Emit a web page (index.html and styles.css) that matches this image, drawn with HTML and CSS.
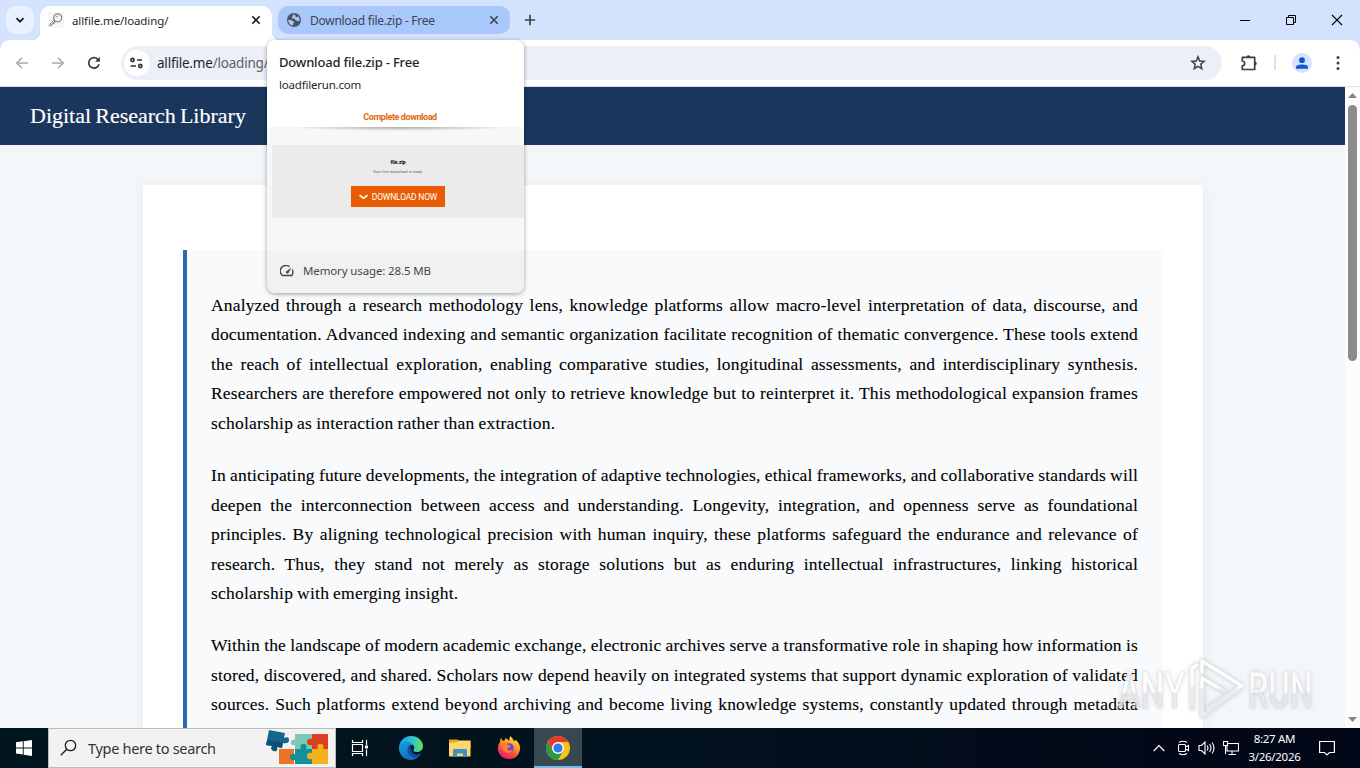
FILE: index.html
```
<!DOCTYPE html>
<html lang="en">

<head>
    <meta charset="UTF-8">
    <meta name="viewport" content="width=device-width, initial-scale=1.0">
    <title>Digital Research Library</title>
    <link rel="stylesheet" href="styles.css">
</head>

<body>
    <!-- Browser tabs -->
    <div class="tabstrip">
        <button class="tab-search"><svg width="10" height="10" viewBox="0 0 10 10"><path d="M1.5 3.2L5 6.7l3.500-3.500" fill="none" stroke="#1f1f1f" stroke-width="1.8"/></svg></button>
        <div class="tab tab-active">
            <svg class="favicon" width="16" height="16" viewBox="0 0 16 16"><rect width="16" height="16" fill="#f6f6f6"/><g fill="none" stroke="#858585"><circle cx="9.700" cy="5.800" r="4" stroke-width="1.300"/><path d="M7 9l-5 5M6 8l-4.500 4.500q-.5 1.500 1 1.200L7.500 10M8 5.500q.5-1.500 2-1.500" stroke-width="1"/></g></svg>
            <span class="tab-title">allfile.me/loading/</span>
            <svg class="tab-close" width="10" height="10" viewBox="0 0 10 10"><path d="M1.300 1.300l7.400 7.400M8.700 1.300L1.300 8.700" stroke="#1f1f1f" stroke-width="1.600"/></svg>
        </div>
        <div class="tab tab-hover">
            <svg class="favicon" width="16" height="16" viewBox="0 0 16 16"><circle cx="8" cy="8" r="7" fill="#4b5461"/><path d="M2.200 8q2-.5 4 .8t2.200 1.200q-.4 1-1.200 1.400L7 13.600Q2.500 13 2.200 8zM8.500 2.300q-1.700.3-1.700 1.500 0 1-.9 1.300v1.300h2.500q.8.300.9 1.500 1.500 0 2 1.200 1.600-.3 2.300.1.500-3-1.600-5.200-.3 1.400-1.500 1.300-1.200-.1-1-1z" fill="#a8c7fa"/></svg>
            <span class="tab-title">Download file.zip - Free</span>
            <svg class="tab-close" width="10" height="10" viewBox="0 0 10 10"><path d="M1.300 1.300l7.400 7.400M8.700 1.300L1.300 8.700" stroke="#3c4350" stroke-width="1.600"/></svg>
        </div>
        <svg class="new-tab" width="12" height="12" viewBox="0 0 12 12"><path d="M6 .8v10.400M.8 6h10.400" stroke="#3f4349" stroke-width="1.700"/></svg>
        <div class="window-buttons">
            <svg width="12" height="12" viewBox="0 0 12 12"><path d="M1 6.500h10" stroke="#000"/></svg>
            <svg width="12" height="12" viewBox="0 0 12 12"><path d="M1.500 3.500h7v7h-7zM3.500 3.500v-2h7v7h-2" fill="none" stroke="#000"/></svg>
            <svg width="12" height="12" viewBox="0 0 12 12"><path d="M1 1l10 10M11 1L1 11" stroke="#000" stroke-width="1.100"/></svg>
        </div>
    </div>

    <!-- Toolbar -->
    <div class="toolbar-wrap">
        <div class="toolbar">
            <svg class="nav-icon" width="16" height="16" viewBox="0 0 16 16"><path d="M14 8H3M8 2.700L2.700 8 8 13.300" fill="none" stroke="#a9abae" stroke-width="1.500"/></svg>
            <svg class="nav-icon" width="16" height="16" viewBox="0 0 16 16"><path d="M2 8h11M8 2.700L13.300 8 8 13.300" fill="none" stroke="#a9abae" stroke-width="1.500"/></svg>
            <svg class="nav-icon" width="16" height="16" viewBox="0 0 16 16"><path d="M13 9.200A5.200 5.200 0 1 1 11.800 4.400L13 5.700" fill="none" stroke="#3c4043" stroke-width="1.700"/><path d="M13.900 1.800v5H9z" fill="#3c4043"/></svg>
            <div class="omnibox">
                <span class="site-info"><svg width="16" height="16" viewBox="0 0 16 16"><g fill="none" stroke="#303134" stroke-width="1.600"><circle cx="3.500" cy="5" r="1.600"/><path d="M8 5h5M1.500 11h5.500"/><circle cx="11.300" cy="11" r="1.600"/></g></svg></span>
                <span class="url">allfile.me<span>/loading/</span></span>
                <svg class="star" width="18" height="18" viewBox="0 0 18 18"><path d="M9 2.800l1.700 4.200 4.400.4-3.300 2.900 1 4.300L9 12.300l-3.800 2.300 1-4.300-3.300-2.900 4.400-.4z" fill="none" stroke="#3c4043" stroke-width="1.500"/></svg>
            </div>
            <svg class="puzzle" width="20" height="20" viewBox="0 0 20 20"><path d="M3.300 4.300h12.400v12.200H3.300v-3.700c3.200-.5 3.200-4.300 0-4.800z" fill="none" stroke="#3c4043" stroke-width="1.700" stroke-linejoin="round"/><path d="M7.400 4.200a2 2 0 0 1 4 0zM15.700 8.400a2 2 0 0 1 0 4z" fill="#3c4043"/></svg>
            <span class="divider"></span>
            <span class="profile"><svg width="20" height="20" viewBox="0 0 20 20"><circle cx="10" cy="7.200" r="2.900" fill="#0b57d0"/><path d="M4 15.800v-1.600q0-2.800 6-2.800t6 2.800v1.600z" fill="#0b57d0"/></svg></span>
            <svg class="menu" width="4" height="16" viewBox="0 0 4 16"><g fill="#3c4043"><circle cx="2" cy="2.500" r="1.500"/><circle cx="2" cy="8" r="1.500"/><circle cx="2" cy="13.500" r="1.500"/></g></svg>
        </div>
    </div>

    <!-- Web page -->
    <div class="viewport">
        <div class="page">
            <header class="site-header">Digital Research Library</header>
            <main class="card">
                <article class="article">
                    <p>
                        <span class="line">Analyzed through a research methodology lens, knowledge platforms allow macro-level interpretation of data, discourse, and</span>
                        <span class="line">documentation. Advanced indexing and semantic organization facilitate recognition of thematic convergence. These tools extend</span>
                        <span class="line">the reach of intellectual exploration, enabling comparative studies, longitudinal assessments, and interdisciplinary synthesis.</span>
                        <span class="line">Researchers are therefore empowered not only to retrieve knowledge but to reinterpret it. This methodological expansion frames</span>
                        <span class="line last">scholarship as interaction rather than extraction.</span>
                    </p>
                    <p>
                        <span class="line">In anticipating future developments, the integration of adaptive technologies, ethical frameworks, and collaborative standards will</span>
                        <span class="line">deepen the interconnection between access and understanding. Longevity, integration, and openness serve as foundational</span>
                        <span class="line">principles. By aligning technological precision with human inquiry, these platforms safeguard the endurance and relevance of</span>
                        <span class="line">research. Thus, they stand not merely as storage solutions but as enduring intellectual infrastructures, linking historical</span>
                        <span class="line last">scholarship with emerging insight.</span>
                    </p>
                    <p>
                        <span class="line">Within the landscape of modern academic exchange, electronic archives serve a transformative role in shaping how information is</span>
                        <span class="line">stored, discovered, and shared. Scholars now depend heavily on integrated systems that support dynamic exploration of validated</span>
                        <span class="line">sources. Such platforms extend beyond archiving and become living knowledge systems, constantly updated through metadata</span>
                    </p>
                </article>
            </main>
        </div>
        <div class="scrollbar">
            <svg width="9" height="5" viewBox="0 0 9 5"><path d="M0 5l4.500-5L9 5z" fill="#858585"/></svg>
            <span class="thumb"></span>
            <svg class="arrow-down" width="9" height="5" viewBox="0 0 9 5"><path d="M0 0l4.500 5L9 0z" fill="#858585"/></svg>
        </div>
    </div>

    <!-- Taskbar -->
    <div class="taskbar">
        <span class="start"><svg width="16" height="16" viewBox="0 0 16 16"><path d="M0 2.300L6.800 1.300v6.200H0zM7.700 1.200L16 0v7.500H7.700zM0 8.400h6.800v6.200L0 13.600zM7.700 8.400H16V16l-8.300-1.200z" fill="#fff"/></svg></span>
        <div class="search">
            <svg width="17" height="18" viewBox="0 0 17 18"><g fill="none" stroke="#1a1a1a" stroke-width="1.300"><circle cx="10.500" cy="6.500" r="5.200"/><path d="M6.800 10.200L.8 16.300"/></g></svg>
            <span>Type here to search</span>
            <svg class="search-art" width="64" height="36" viewBox="0 0 64 36">
                <path d="M14 19h15v15H14z" fill="#ed7225"/>
                <path d="M30 4h17v15H30v-4q-4 1-4-2.500t4-2.500z" fill="#7cc8b7"/>
                <path d="M47 4h16v15H47v-4q-5 1-5-3t5-3z" fill="#d8401f"/>
                <path d="M30 19h6q-2-5 2.500-5t2.500 5h6v15H30v-4q-5 1-5-3t5-3z" fill="#13909a"/>
                <path d="M47 19h6q-2-5 2.500-5t2.500 5h5v15H47v-5q-5 1-5-3t5-3z" fill="#f6b319"/>
                <path d="M4 0l16 3-1 5q5-2 5 2t-6 3l-1 5-5-1q1 5-3 4t-2-5l-6-1z" fill="#13678e"/>
                <path d="M2.500 10l15 2.500-.5 5.500-5-1q1 5-3 4t-2-5l-6-1z" fill="#0d5276"/>
            </svg>
        </div>
        <div class="apps">
            <span class="app app-view"><svg width="18" height="16" viewBox="0 0 18 16"><path d="M1.500 0v2.500h10V0M1.500 16v-2.500h10V16M1.500 4.500v7h10v-7zM15.500 0v5M15.500 9.500V16" fill="none" stroke="#fff" stroke-width="1.200"/><path d="M14 5.500h3v3h-3z" fill="#fff"/></svg></span>
            <span class="app"><svg width="24" height="24" viewBox="0 0 24 24">
                <defs>
                    <linearGradient id="edgeTop" x1="0" x2="1"><stop offset="0" stop-color="#1495dd"/><stop offset=".55" stop-color="#2cc4d5"/><stop offset="1" stop-color="#67df54"/></linearGradient>
                    <linearGradient id="edgeBottom" x1="0" y1="0" x2="1" y2="1"><stop offset="0" stop-color="#1b9de2"/><stop offset="1" stop-color="#0c5cae"/></linearGradient>
                </defs>
                <path d="M0 12C0 5 5 0 12 0s12 5 12 10c0 4-3 6-6.500 6-2.500 0-3.700-1-3-2 2-3-.5-6-3.500-6-5 0-8 3-11 4z" fill="url(#edgeTop)"/>
                <path d="M0 12c1-5 6-7 10-6 2 .4 3.500 2 3.500 3-4-1-6 6-1 9 3.500 2 7 1 9.500-.5C20 21.500 16 24 12 24 5 24 0 19 0 12z" fill="url(#edgeBottom)"/>
                <path d="M8.500 13c-.5 5 4 9 9 9 2-1 4-3 4.500-4.500-4 2.500-9 .5-9.500-3C12 12 14 11 14 10c-1-1.500-5-1-5.500 3z" fill="#0d4f9e"/>
                <path d="M11 9.500q3-.5 3.500 2 0 1.500-1 3-2-1-2.500-5z" fill="#061825"/>
            </svg></span>
            <span class="app"><svg width="22" height="20" viewBox="0 0 22 20"><path d="M0 1.500h8.500l2 1.500H21.500V10H0z" fill="#e8a51d"/><path d="M0 5l8-1 2-1.500h11.500v16H0z" fill="#ffd768"/><path d="M4 19v-6.500q0-1.500 1.500-1.500h11q1.500 0 1.500 1.500V19h-4v-3.500H8V19z" fill="#3b8ed0"/></svg></span>
            <span class="app"><svg width="24" height="24" viewBox="0 0 24 24">
                <defs><linearGradient id="fox" x1=".8" y1="0" x2=".3" y2="1"><stop offset="0" stop-color="#fff14a"/><stop offset=".4" stop-color="#ff9a20"/><stop offset=".75" stop-color="#ff3b48"/><stop offset="1" stop-color="#e31587"/></linearGradient></defs>
                <path d="M3 6q0-2 1-4l2 3 2-1 .5-2Q11 3 12 5l1-5q3 2 4 5l2-1q5 5 4 10-2 9-11 9T.8 14Q.5 9 3 6z" fill="url(#fox)"/>
                <circle cx="12" cy="12" r="4.800" fill="#7542df"/>
                <path d="M5 8q4-2 6 1l3 .5q-1 2-3.500 2.500-1 2 2 2.500l3-.7q-1.500 3.500-5 3.200-5.500-1-5.500-9z" fill="#ff8028"/>
            </svg></span>
            <span class="app app-current"><svg width="24" height="24" viewBox="0 0 24 24"><circle cx="12" cy="12" r="12" fill="#fbc116"/><path d="M1.600 6A12 12 0 0 1 22.400 6H12L6.800 15z" fill="#e33b2e"/><path d="M1.600 6A12 12 0 0 0 12 24l5.200-9H6.800z" fill="#259b48"/><circle cx="12" cy="12" r="6" fill="#fff"/><circle cx="12" cy="12" r="4.600" fill="#3678e8"/></svg></span>
        </div>
        <div class="tray">
            <svg width="12" height="8" viewBox="0 0 12 8"><path d="M.7 7L6 1.500 11.300 7" fill="none" stroke="#fff" stroke-width="1.200"/></svg>
            <svg width="14" height="16" viewBox="0 0 14 16"><g fill="none" stroke="#fff" stroke-width="1.100"><rect x="1.500" y="4.500" width="7" height="7" rx="1"/><path d="M8.500 7l3-1.500v5L8.500 9M2 2.500Q6 0 10 2.500M2 13.500q4 2.500 8 0"/></g></svg>
            <svg width="18" height="16" viewBox="0 0 18 16"><g fill="none" stroke="#fff" stroke-width="1.100"><path d="M1 5.500h2.500L7 2v12l-3.500-3.500H1zM9 5.500q2 2.500 0 5M11.500 4q3 4 0 8M14 2.500q4 5.500 0 11"/></g></svg>
            <svg width="16" height="16" viewBox="0 0 16 16"><path d="M5 3.500h10.500v7.500H4V6M9 11v3M5.500 14.500H13M.5 1.500h4v4h-4zM2.500 5.500V14" fill="none" stroke="#fff" stroke-width="1.100"/></svg>
            <div class="clock"><span>8:27 AM</span><span>3/26/2026</span></div>
            <svg class="notify" width="16" height="16" viewBox="0 0 16 16"><path d="M.6 1.500h14.800v11h-4.900L8 15l-2.500-2.500H.6z" fill="none" stroke="#fff" stroke-width="1.200"/></svg>
        </div>
    </div>

    <!-- Hover card of the second tab -->
    <div class="hover-card">
        <div class="hover-head">
            <strong>Download file.zip - Free</strong>
            <span>loadfilerun.com</span>
        </div>
        <div class="preview">
            <div class="preview-top">Complete download</div>
            <div class="preview-body">
                <b>file.zip</b>
                <small>Your free download is ready.</small>
                <span class="download"><svg width="9" height="6" viewBox="0 0 9 6"><path d="M.5 1.200l4 3 4-3" fill="none" stroke="#fff" stroke-width="1.600"/></svg>DOWNLOAD NOW</span>
            </div>
        </div>
        <div class="memory">
            <svg width="14" height="12" viewBox="0 0 14 12"><path d="M9.500 1.700A5.600 5.600 0 0 0 2.300 10.500h9.400A5.600 5.600 0 0 0 12.200 4.500" fill="none" stroke="#474747" stroke-width="1.400"/><path d="M11.500 2.500L8.300 8.200a1.400 1.400 0 0 1-2.200-1.700z" fill="#474747"/></svg>
            <span>Memory usage: 28.5 MB</span>
        </div>
    </div>

    <!-- Watermark -->
    <svg class="watermark" width="220" height="76" viewBox="0 0 220 76">
        <defs>
            <linearGradient id="mark" x1="0" y1="0" x2="0" y2="1"><stop offset=".52" stop-color="#fff" stop-opacity=".85"/><stop offset=".54" stop-color="#e6e8ea" stop-opacity=".75"/></linearGradient>
            <linearGradient id="markLine" x1="0" y1="0" x2="0" y2="1"><stop offset=".48" stop-color="#fcfdfd"/><stop offset=".52" stop-color="#e9ebed"/></linearGradient>
        </defs>
        <g fill="url(#mark)" stroke="#c9cdd1" stroke-opacity=".5" stroke-width=".7">
            <text x="8" y="56" textLength="67" lengthAdjust="spacingAndGlyphs">ANY</text>
            <text x="138" y="56" textLength="65" lengthAdjust="spacingAndGlyphs">RUN</text>
        </g>
        <path d="M92 20V9l40 25-34 22M128 38L92 64V26l22 13" class="mark-edge"/>
        <path d="M92 20V9l40 25-34 22M128 38L92 64V26l22 13" class="mark-line"/>
        <path d="M82 56V16l5-3" class="mark-edge"/>
        <path d="M82 56V16l5-3" class="mark-line"/>
    </svg>
</body>

</html>
```
FILE: styles.css
```
* {
    box-sizing: border-box;
}

body {
    margin: 0;
    width: 1360px;
    height: 768px;
    overflow: hidden;
    display: flex;
    flex-direction: column;
    position: relative;
    font-family: "Noto Sans", sans-serif;
    font-size: 12px;
    color: #1f1f1f;
}

svg {
    display: block;
    flex: none;
}

/* Tabs */
.tabstrip {
    height: 40px;
    flex: none;
    display: flex;
    align-items: center;
    background: #d3e3fd;
}

.tab-search {
    width: 28px;
    height: 28px;
    margin-left: 6px;
    margin-right: 6px;
    padding: 9px;
    border: none;
    border-radius: 10px;
    background: #e9f0fe;
}

.tab {
    display: flex;
    align-items: center;
    padding-left: 8px;
}

.tab-active {
    width: 232px;
    height: 34px;
    align-self: flex-end;
    padding-bottom: 6px;
    background: #fff;
    border-radius: 10px 10px 0 0;
}

/* Flared feet where the tab meets the toolbar */
.tab-active::before,
.tab-active::after {
    content: "";
    align-self: flex-end;
    width: 8px;
    height: 8px;
    flex: none;
    margin-bottom: -6px;
}

.tab-active::before {
    margin-left: -16px;
    margin-right: 8px;
    background: radial-gradient(circle at 0 0, transparent 8px, #fff 8.5px);
}

.tab-active::after {
    margin-right: -8px;
    background: radial-gradient(circle at 100% 0, transparent 8px, #fff 8.5px);
}

.tab-hover {
    width: 232px;
    height: 28px;
    margin-left: 6px;
    background: #a8c7fa;
    border-radius: 10px;
    color: #3c4350;
}

.tab-title {
    margin-left: 8px;
    flex: 1;
    white-space: nowrap;
    font-size: 11.5px;
    letter-spacing: -0.1px;
}

.tab-hover .tab-title {
    font-size: 12px;
    letter-spacing: -0.27px;
}

.tab-close {
    margin-right: 11px;
}

.new-tab {
    margin-left: 14px;
}

.window-buttons {
    margin-left: auto;
    margin-right: 17px;
    display: flex;
    gap: 34px;
}

/* Toolbar */
.toolbar-wrap {
    height: 47px;
    flex: none;
    background: #d3e3fd;
}

.toolbar {
    height: 47px;
    display: flex;
    align-items: center;
    padding: 0 20px 1px 14px;
    background: #fff;
    border-radius: 10px 10px 0 0;
    border-bottom: 1px solid #dfe3ea;
}

.nav-icon {
    margin-right: 20px;
}

.omnibox {
    width: 1101px;
    height: 34px;
    display: flex;
    align-items: center;
    margin-left: -1px;
    padding: 0 15px 0 3px;
    border-radius: 17px;
    background: #eceff8;
}

.site-info {
    width: 26px;
    height: 26px;
    padding: 5px;
    border-radius: 13px;
    background: #fff;
}

.url {
    flex: 1;
    margin-left: 7px;
    font-size: 13.5px;
    letter-spacing: -0.2px;
}

.url span {
    color: #5a5e66;
}

.puzzle {
    margin-left: 17px;
}

.divider {
    width: 2px;
    height: 15px;
    margin: 0 16px 0 15px;
    background: #d9e2f4;
}

.profile {
    width: 20px;
    height: 20px;
    border-radius: 50%;
    background: #d3e3fd;
}

.menu {
    margin-left: auto;
}

/* Page */
.viewport {
    height: 641px;
    flex: none;
    display: flex;
    overflow: hidden;
}

.page {
    width: 1345px;
    overflow: hidden;
    background: #f4f7fa;
    font-family: Georgia, "Liberation Serif", serif;
}

.site-header {
    height: 58px;
    padding: 0 30px;
    line-height: 58px;
    background: #1a365d;
    color: #fff;
    font-size: 22px;
    word-spacing: -1.4px;
    -webkit-text-stroke: 0.15px #fff;
}

.card {
    width: 1060px;
    height: 900px;
    margin: 40px 0 0 143px;
    padding: 65px 40px;
    background: #fff;
    box-shadow: 0 0 14px rgba(0, 0, 0, 0.05);
}

.article {
    height: 800px;
    padding: 40.7px 25px 0 24px;
    border-left: 4px solid #2b6cb0;
    background: #f8fafc;
}

.article p {
    margin: 0 0 22.4px;
    font-size: 17.5px;
    line-height: 29.58px;
    letter-spacing: 0.17px;
    word-spacing: -0.6px;
    color: #000;
    -webkit-text-stroke: 0.1px #000;
}

.line {
    display: block;
    white-space: nowrap;
    text-align: justify;
    text-align-last: justify;
}

.last {
    text-align-last: left;
    letter-spacing: 0.22px;
}

.scrollbar {
    width: 15px;
    display: flex;
    flex-direction: column;
    align-items: center;
    padding: 6px 0;
    background: #fcfcfc;
}

.thumb {
    width: 9px;
    height: 256px;
    margin-top: 7px;
    border-radius: 5px;
    background: #8b8b8b;
}

.arrow-down {
    margin-top: auto;
}

/* Taskbar */
.taskbar {
    height: 40px;
    flex: none;
    display: flex;
    background: linear-gradient(90deg, #02161f, #02121e 50%, #020817 85%);
    color: #fff;
}

.start {
    width: 48px;
    padding: 12px 16px;
}

.search {
    width: 288px;
    display: flex;
    align-items: center;
    padding-left: 11px;
    border: 1px solid #b9bcbd;
    background: #f2f2f2;
    color: #333;
    font-size: 14.5px;
}

.search span {
    margin-left: 11px;
    letter-spacing: -0.3px;
}

.search-art {
    margin-left: auto;
    margin-right: 6px;
}

.apps {
    display: flex;
}

.app {
    width: 49px;
    height: 40px;
    display: flex;
    align-items: center;
    justify-content: center;
}

.app-view {
    width: 50px;
    padding-right: 2px;
}

.app-current {
    width: 48px;
    margin-left: 1px;
    background: #374850;
    border-bottom: 2px solid #76b9ed;
    padding-top: 2px;
}

.tray {
    display: flex;
    align-items: center;
    margin-left: auto;
    padding-right: 25px;
}

.tray svg {
    margin-right: 12px;
}

.tray svg:nth-child(2),
.tray svg:nth-child(3) {
    margin-right: 7px;
}

.tray svg:nth-child(4) {
    margin-right: 8px;
}

.clock {
    width: 55px;
    display: flex;
    flex-direction: column;
    align-items: center;
    font-size: 11.5px;
    line-height: 18px;
    letter-spacing: -0.3px;
    white-space: nowrap;
}

.tray .notify {
    margin: 0 0 0 17px;
}

/* Tab hover card */
.hover-card {
    position: absolute;
    left: 267px;
    top: 40px;
    width: 257px;
    height: 253px;
    display: flex;
    flex-direction: column;
    overflow: hidden;
    border-radius: 8px;
    background: #fff;
    box-shadow: 0 1px 4px rgba(0, 0, 0, 0.38);
}

.hover-head {
    height: 66px;
    padding: 13px 12px 0;
    display: flex;
    flex-direction: column;
    gap: 5px;
    line-height: 18px;
    font-size: 11.5px;
    letter-spacing: -0.2px;
}

.hover-head strong {
    font-size: 13px;
    font-weight: 500;
    letter-spacing: -0.18px;
}

.preview {
    height: 145px;
    background: #f7f7f7;
    font-family: Roboto, sans-serif;
}

.preview-top {
    height: 21px;
    padding-left: 9px;
    background: #fff;
    color: #e2690f;
    font-size: 9px;
    font-weight: 700;
    line-height: 22px;
    letter-spacing: -0.4px;
    text-align: center;
}

.preview-top::after {
    content: "";
    display: block;
    height: 4px;
    margin: -1px 12px 0;
    background: radial-gradient(ellipse at top, #aaa, transparent 70%);
}

.preview-body {
    height: 73px;
    margin: 18px 0 0 5px;
    padding-top: 12px;
    display: flex;
    flex-direction: column;
    align-items: center;
    background: #ebebeb;
}

.preview-body b {
    font-size: 5px;
    line-height: 10px;
    color: #000;
}

.preview-body small {
    font-size: 4px;
    line-height: 10px;
    color: #666;
}

.download {
    width: 94px;
    height: 21px;
    margin-top: 9px;
    display: flex;
    align-items: center;
    justify-content: center;
    gap: 4px;
    background: #e85d04;
    color: #fff;
    font-size: 8.5px;
    letter-spacing: -0.2px;
    white-space: nowrap;
}

.memory {
    height: 42px;
    display: flex;
    align-items: center;
    padding: 0 13px 3px;
    gap: 9px;
    background: #f1f1f1;
    color: #474747;
    font-size: 11.5px;
    letter-spacing: -0.13px;
}

/* Watermark over the page */
.watermark {
    position: absolute;
    left: 1110px;
    top: 652px;
    overflow: visible;
    font-family: Roboto, sans-serif;
    font-size: 50px;
    font-weight: 500;
    filter: drop-shadow(0 0 2px rgba(0, 0, 0, 0.15));
}

.mark-edge {
    fill: none;
    stroke: #d8dadc;
    stroke-width: 5px;
    stroke-linejoin: round;
    stroke-linecap: round;
    opacity: 0.8;
}

.mark-line {
    fill: none;
    stroke: url(#markLine);
    stroke-width: 3.6px;
    stroke-linejoin: round;
    stroke-linecap: round;
}
```
